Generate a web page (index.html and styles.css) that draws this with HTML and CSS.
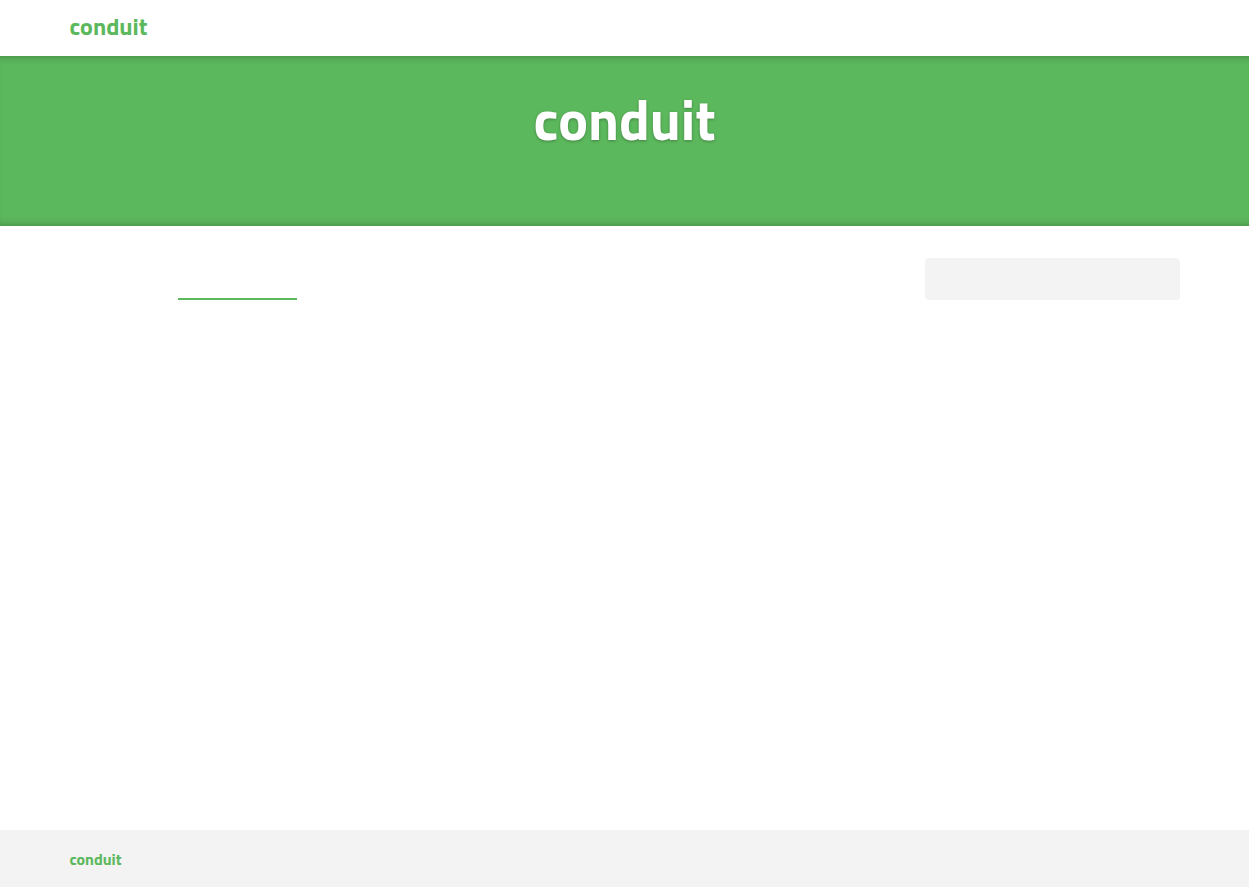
FILE: index.html
```html
<!DOCTYPE html>
<html lang="en">
<head>
<meta charset="utf-8">
<meta name="viewport" content="width=device-width, initial-scale=1">
<title>Conduit</title>
<link rel="stylesheet" href="styles.css">
</head>
<body>
<nav class="navbar"><div class="container"><a class="navbar-brand" href="#">conduit</a></div></nav>
<header class="banner"><h1 class="banner-title">conduit</h1></header>
<main class="container page">
  <section class="feed"><div class="feed-tabs"><div class="feed-tab"></div><div class="feed-tab feed-tab-active"></div></div></section>
  <aside class="sidebar"></aside>
</main>
<footer class="footer"><div class="container"><a class="footer-brand" href="#">conduit</a></div></footer>
</body>
</html>
```
FILE: styles.css
```css
* { box-sizing: border-box; }
body {
  display: flex;
  flex-direction: column;
  min-height: 100vh;
  margin: 0;
  background: #fff;
  font-family: "Titillium Web", "Noto Sans", sans-serif;
}
a { color: #5cb85c; text-decoration: none; }
.container { width: 100%; max-width: 1140px; margin: 0 auto; padding: 0 15px; }
.navbar { padding: 8px 0 12px; }
.navbar-brand { display: block; width: fit-content; font-size: 24px; font-weight: 700; line-height: 36px; }
.banner {
  padding: 32px 32px 74px;
  background: #5cb85c;
  box-shadow: inset 0 8px 8px -8px rgba(0, 0, 0, 0.3), inset 0 -8px 8px -8px rgba(0, 0, 0, 0.3);
  color: #fff;
  text-align: center;
}
.banner-title {
  margin: 0;
  font-size: 56px;
  font-weight: 700;
  line-height: 64px;
  text-shadow: 0 1px 3px rgba(0, 0, 0, 0.3);
}
.page { display: flex; align-items: flex-start; gap: 30px; flex: 1; padding-top: 32px; }
.feed { flex: 3; }
.feed-tabs { display: flex; height: 42px; }
.feed-tab { width: 108px; }
.feed-tab-active { width: 119px; border-bottom: 2px solid #5cb85c; }
.sidebar { flex: 1; max-width: 255px; height: 42px; border-radius: 4px; background: #f3f3f3; }
.footer { padding: 16px 0 14px; background: #f3f3f3; }
.footer-brand { display: block; width: fit-content; font-size: 16px; font-weight: 700; line-height: 27px; }
```
